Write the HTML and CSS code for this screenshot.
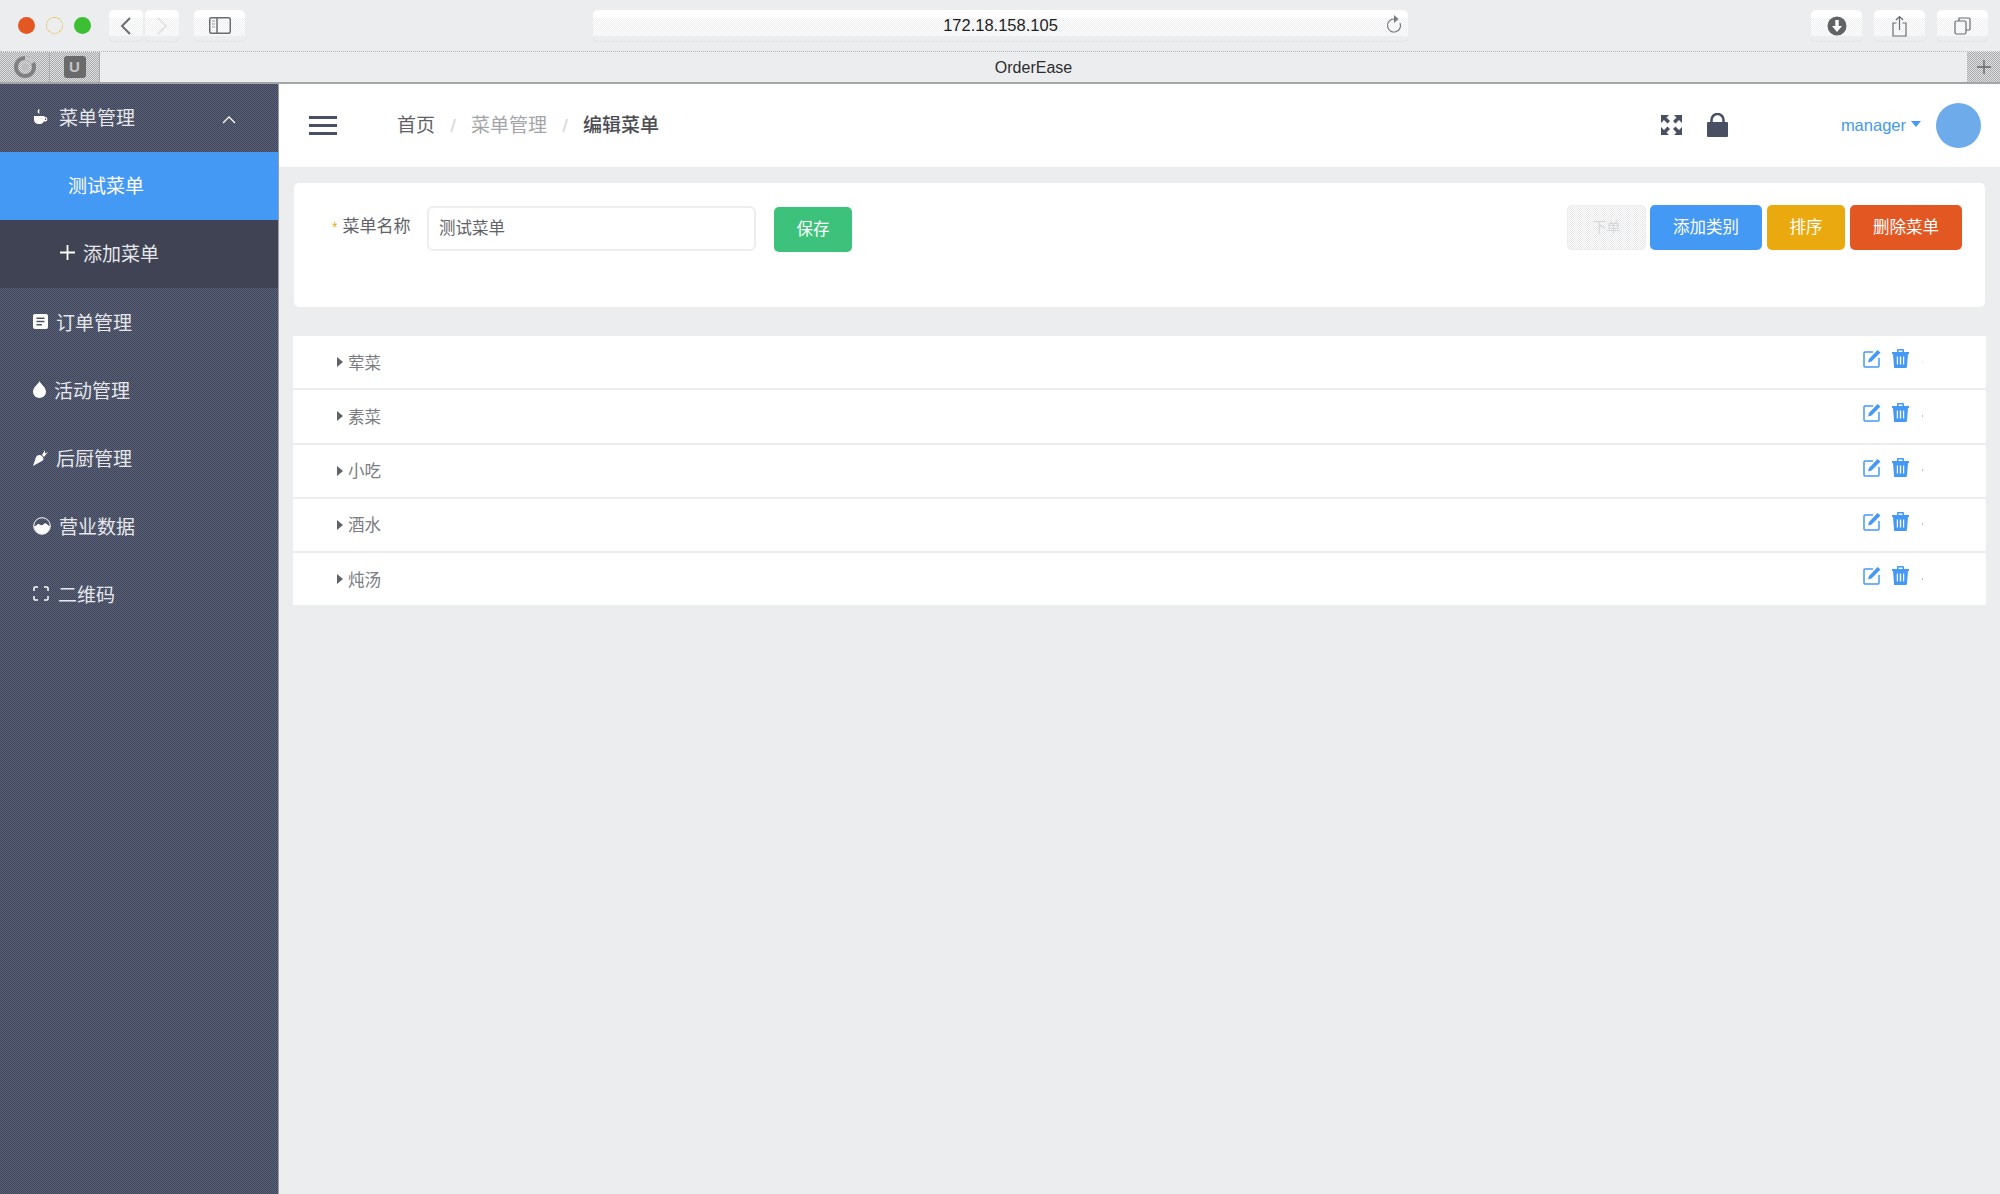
FILE: index.html
```html
<!DOCTYPE html>
<html lang="zh-CN">
<head>
    <meta charset="UTF-8">
    <meta name="viewport" content="width=device-width, initial-scale=1.0">
    <title>OrderEase</title>
    <link rel="stylesheet" href="styles.css">
</head>
<body>

    <!-- 浏览器工具栏 -->
    <div class="toolbar">
        <span class="light light-red"></span>
        <span class="light light-yellow"></span>
        <span class="light light-green"></span>
        <div class="tool-btn nav-back">
            <svg width="14" height="20" viewBox="0 0 14 20"><path d="M11 2 3 10l8 8" fill="none" stroke="#6b6d72" stroke-width="2"/></svg>
        </div>
        <div class="tool-btn nav-forward">
            <svg width="14" height="20" viewBox="0 0 14 20"><path d="m3 2 8 8-8 8" fill="none" stroke="#e2e3e5" stroke-width="2"/></svg>
        </div>
        <div class="tool-btn side-toggle">
            <svg width="22" height="17" viewBox="0 0 22 17"><rect x=".75" y=".75" width="20.5" height="15.5" rx="1.5" fill="none" stroke="#6b6d72" stroke-width="1.5"/><path d="M8 1v15" stroke="#6b6d72" stroke-width="1.5"/><path d="M3 4h3M3 7h3M3 10h3" stroke="#9a9ca0"/></svg>
        </div>
        <div class="url-bar">
            <span class="url-text">172.18.158.105</span>
            <svg class="reload" width="16" height="20" viewBox="0 0 16 20"><path d="M8 5a6.500 6.500 0 1 0 6 4" fill="none" stroke="#77797d" stroke-width="1.200"/><path d="M8 1 12.500 5 8 9z" fill="#77797d"/></svg>
        </div>
        <div class="tool-right">
            <div class="tool-btn wide">
                <svg width="20" height="20" viewBox="0 0 20 20"><circle cx="10" cy="10" r="9.500" fill="#606266"/><path d="M8.300 4h3.400v6H15l-5 6-5-6h3.300z" fill="#fff"/></svg>
            </div>
            <div class="tool-btn wide">
                <svg width="15" height="22" viewBox="0 0 15 22"><path d="M4.500 8H1v13h13V8h-3.500M7.500 15V1.500M4 5l3.500-3.500L11 5" fill="none" stroke="#6b6d72" stroke-width="1.200"/></svg>
            </div>
            <div class="tool-btn wide">
                <svg width="17" height="18" viewBox="0 0 17 18"><rect x="1" y="4" width="11" height="13" rx="1.500" fill="none" stroke="#6b6d72" stroke-width="1.200"/><path d="M5 4V1h10a1 1 0 0 1 1 1v10a1 1 0 0 1-1 1h-3" fill="none" stroke="#6b6d72" stroke-width="1.200"/></svg>
            </div>
        </div>
    </div>

    <!-- 标签栏 -->
    <div class="tabbar">
        <div class="pin-tab">
            <svg width="24" height="24" viewBox="0 0 24 24"><circle cx="12" cy="12" r="9" fill="none" stroke="#808082" stroke-width="4"/><path d="M12 3a9 9 0 0 1 8 5" fill="none" stroke="#c8c8ca" stroke-width="4"/><circle cx="12" cy="12" r="3.500" fill="#bdbdbf"/></svg>
        </div>
        <div class="pin-tab">
            <span class="u-badge">U</span>
        </div>
        <div class="tab-title">OrderEase</div>
        <div class="new-tab">
            <svg width="14" height="14" viewBox="0 0 14 14"><path d="M7 0v14M0 7h14" stroke="#666" stroke-width="1.300"/></svg>
        </div>
    </div>

    <div class="app">
        <div class="sidebar">
            <div class="menu-item menu-open">
                <svg class="menu-icon icon-cup" width="15" height="16" viewBox="0 0 15 16"><path d="M1 7h10.500v1h.7a2.200 2.200 0 0 1 0 4.400h-1.300A5 5 0 0 1 8 15H5a4.500 4.500 0 0 1-4-4zm11 2.300V11h.5a.9.9 0 0 0 0-1.800z" fill="#fff"/><path d="M6 0c1.500 1.500-1 2.500 1 5-3-1-3-3-1-5z" fill="#fff"/></svg>
                <span>菜单管理</span>
                <svg class="menu-arrow" width="14" height="8" viewBox="0 0 14 8"><path d="m1 7 6-6 6 6" fill="none" stroke="#fff" stroke-width="1.300"/></svg>
            </div>
            <div class="menu-item sub-active">测试菜单</div>
            <div class="menu-item sub-add">
                <svg class="add-icon" width="15" height="15" viewBox="0 0 15 15"><path d="M7.500 0v15M0 7.500h15" stroke="#fff" stroke-width="1.800"/></svg>
                <span>添加菜单</span>
            </div>
            <div class="menu-item menu-low">
                <svg class="menu-icon icon-order" width="15" height="15" viewBox="0 0 15 15"><path fill-rule="evenodd" d="M2 0h11a2 2 0 0 1 2 2v11a2 2 0 0 1-2 2H2a2 2 0 0 1-2-2V2a2 2 0 0 1 2-2zm1.500 3.500v1.500h8V3.500zm0 3.200v1.500h8V6.700zm0 3.200v1.500h5.500V9.900z" fill="#fff"/></svg>
                <span>订单管理</span>
            </div>
            <div class="menu-item menu-low">
                <svg class="menu-icon icon-drop" width="13" height="17" viewBox="0 0 13 17"><path d="M6.500 0c1 3 6.500 6 6.500 11a6.500 6 0 0 1-13 0C0 6 5.500 3 6.500 0z" fill="#fff"/></svg>
                <span>活动管理</span>
            </div>
            <div class="menu-item menu-low">
                <svg class="menu-icon icon-carrot" width="15" height="16" viewBox="0 0 15 16"><path d="M0 16 3 7c1-2 4-3 6-1s2 4 0 5z" fill="#fff"/><path d="M9 5l3-5v3.500L15 2l-4 5z" fill="#fff"/></svg>
                <span>后厨管理</span>
            </div>
            <div class="menu-item menu-low">
                <svg class="menu-icon icon-wave" width="18" height="18" viewBox="0 0 18 18"><circle cx="9" cy="9" r="8.300" fill="none" stroke="#fff" stroke-width="1"/><path d="M1 9c2 1 3-2 4.500-2S8 9 9.500 8s2-2.500 3.500-1.500S15.500 9 17 9a8 8 0 0 1-16 0z" fill="#fff"/></svg>
                <span>营业数据</span>
            </div>
            <div class="menu-item menu-low">
                <svg class="menu-icon icon-scan" width="16" height="15" viewBox="0 0 16 15"><path d="M5 1H2a1 1 0 0 0-1 1v3M11 1h3a1 1 0 0 1 1 1v3M5 14H2a1 1 0 0 1-1-1v-3M11 14h3a1 1 0 0 0 1-1v-3" fill="none" stroke="#fff" stroke-width="1.500"/></svg>
                <span>二维码</span>
            </div>
        </div>

        <div class="main">
            <div class="header">
                <div class="hamburger"><span></span><span></span><span></span></div>
                <div class="breadcrumb">
                    <span class="crumb-home">首页</span>
                    <span class="crumb-sep">/</span>
                    <span class="crumb-mid">菜单管理</span>
                    <span class="crumb-sep">/</span>
                    <span class="crumb-now">编辑菜单</span>
                </div>
                <div class="header-right">
                    <svg class="icon-full" width="21" height="20" viewBox="0 0 21 20"><path d="M0 0h8L5.500 2.500 9 6 6.500 8.500 3 5 0 8zM21 0h-8l2.500 2.500L12 6l2.500 2.500L18 5l3 3zM0 20v-8l3 3 3.500-3.500L9 14l-3.500 3.500L8 20zM21 20h-8l2.500-2.500L12 14l2.500-2.500L18 15l3-3z" fill="#4a5064"/></svg>
                    <svg class="icon-lock" width="21" height="24" viewBox="0 0 21 24"><path d="M4.500 11V7a6 6 0 0 1 12 0V11" fill="none" stroke="#4a5064" stroke-width="2.500"/><rect y="9" width="21" height="15" rx="1" fill="#4a5064"/></svg>
                    <span class="user-name">manager</span>
                    <span class="user-caret"></span>
                    <span class="avatar"></span>
                </div>
            </div>

            <div class="card">
                <label class="field-label"><span class="star">*</span>菜单名称</label>
                <div class="name-input">测试菜单</div>
                <button class="btn btn-save">保存</button>
                <div class="btn-group">
                    <button class="btn btn-disabled">下单</button>
                    <button class="btn btn-blue">添加类别</button>
                    <button class="btn btn-orange">排序</button>
                    <button class="btn btn-red">删除菜单</button>
                </div>
            </div>

            <div class="category-list">
                <div class="category">
                    <span class="caret"></span><span class="cat-name">荤菜</span>
                    <div class="cat-actions">
                        <svg width="18" height="19" viewBox="0 0 18 19"><use href="#edit-icon"/></svg>
                        <svg width="17" height="19" viewBox="0 0 17 19"><use href="#trash-icon"/></svg>
                        <span class="cat-dot"></span>
                    </div>
                </div>
                <div class="category">
                    <span class="caret"></span><span class="cat-name">素菜</span>
                    <div class="cat-actions">
                        <svg width="18" height="19" viewBox="0 0 18 19"><use href="#edit-icon"/></svg>
                        <svg width="17" height="19" viewBox="0 0 17 19"><use href="#trash-icon"/></svg>
                        <span class="cat-dot"></span>
                    </div>
                </div>
                <div class="category">
                    <span class="caret"></span><span class="cat-name">小吃</span>
                    <div class="cat-actions">
                        <svg width="18" height="19" viewBox="0 0 18 19"><use href="#edit-icon"/></svg>
                        <svg width="17" height="19" viewBox="0 0 17 19"><use href="#trash-icon"/></svg>
                        <span class="cat-dot"></span>
                    </div>
                </div>
                <div class="category">
                    <span class="caret"></span><span class="cat-name">酒水</span>
                    <div class="cat-actions">
                        <svg width="18" height="19" viewBox="0 0 18 19"><use href="#edit-icon"/></svg>
                        <svg width="17" height="19" viewBox="0 0 17 19"><use href="#trash-icon"/></svg>
                        <span class="cat-dot"></span>
                    </div>
                </div>
                <div class="category">
                    <span class="caret"></span><span class="cat-name">炖汤</span>
                    <div class="cat-actions">
                        <svg width="18" height="19" viewBox="0 0 18 19"><use href="#edit-icon"/></svg>
                        <svg width="17" height="19" viewBox="0 0 17 19"><use href="#trash-icon"/></svg>
                        <span class="cat-dot"></span>
                    </div>
                </div>
            </div>
        </div>
    </div>

    <!-- 操作图标 -->
    <svg class="icon-defs" width="0" height="0">
        <symbol id="edit-icon" viewBox="0 0 18 19">
            <path d="M10 3H2a1 1 0 0 0-1 1v13a1 1 0 0 0 1 1h13a1 1 0 0 0 1-1V9" fill="none" stroke="#4499f5" stroke-width="1.500"/>
            <path d="M5 13.500 6 10 14.500 1l3 2.500L8.500 12.500z" fill="#4499f5"/>
        </symbol>
        <symbol id="trash-icon" viewBox="0 0 17 19">
            <path fill-rule="evenodd" d="M0 3h5V1a1 1 0 0 1 1-1h5a1 1 0 0 1 1 1v2h5v2h-1l-1 12.500a1.500 1.500 0 0 1-1.500 1.500h-9A1.500 1.500 0 0 1 2 17.500L1 5H0zM6.500 1.500V3h4V1.500zM4.800 7.500v8H6v-8zm3 0v8h1.400v-8zm3.200 0v8h1.200v-8z" fill="#4499f5"/>
        </symbol>
    </svg>

</body>
</html>
```

FILE: styles.css
```css
* {
    box-sizing: border-box;
}

body {
    font-family: "Liberation Sans", "Noto Sans CJK SC", sans-serif;
    background-color: #ecedef;
    margin: 0;
    width: 2000px;
    height: 1194px;
    overflow: hidden;
}

.icon-defs {
    display: block;
    height: 0;
}

/* toolbar */
.toolbar {
    height: 52px;
    display: flex;
    align-items: flex-start;
    padding: 10px 12px 0 18px;
    border-bottom: 1px dotted #b5b6b8;
    background-color: #ecedef;
}

.light {
    width: 17px;
    height: 17px;
    border-radius: 50%;
    margin: 7px 11px 0 0;
}

.light-red {
    background-color: #e35722;
}

.light-yellow {
    border: 1px dotted #eaa90e;
}

.light-green {
    background-color: #3dbf33;
    margin-right: 0;
}

.tool-btn,
.url-bar {
    height: 32px;
    border-radius: 5px;
    border-bottom: 1px dotted #c8c9cb;
    background:
        linear-gradient(#fff 8px, transparent 8px, transparent 26px, #ecedef 26px),
        repeating-conic-gradient(#fff 0 25%, #eeeff1 0 50%) 0 0 / 2px 2px;
}

.tool-btn {
    width: 34px;
    display: flex;
    align-items: center;
    justify-content: center;
}

.nav-back {
    margin-left: 18px;
}

.nav-forward {
    margin-left: 2px;
}

.side-toggle {
    width: 51px;
    margin-left: 15px;
}

.url-bar {
    width: 815px;
    margin-left: 348px;
    position: relative;
    text-align: center;
    font-size: 16.5px;
    line-height: 31px;
    color: #1d1d1f;
}

.reload {
    position: absolute;
    top: 4px;
    right: 6px;
}

.tool-right {
    margin-left: auto;
    display: flex;
    gap: 12px;
}

.wide {
    width: 51px;
}

/* tabs */
.tabbar {
    height: 32px;
    display: flex;
    align-items: stretch;
    border-bottom: 2px solid #a4a5a7;
    background-color: #ecedef;
}

.pin-tab {
    width: 50px;
    border-right: 1px solid #aaa;
    background: repeating-conic-gradient(#a8a9ab 0 25%, #e0e1e3 0 50%) 0 0 / 2px 2px;
    display: flex;
    align-items: center;
    justify-content: center;
}

.u-badge {
    width: 22px;
    height: 22px;
    border-radius: 3px;
    background-color: #6a6a6c;
    color: #c4c4c6;
    font-size: 15px;
    font-weight: bold;
    line-height: 22px;
    text-align: center;
}

.tab-title {
    flex: 1;
    text-align: center;
    font-size: 16px;
    line-height: 31px;
    color: #2d2d2f;
}

.new-tab {
    width: 33px;
    background: repeating-conic-gradient(#a8a9ab 0 25%, #e0e1e3 0 50%) 0 0 / 2px 2px;
    display: flex;
    align-items: center;
    justify-content: center;
}

/* app */
.app {
    display: flex;
    height: 1110px;
}

.sidebar {
    width: 279px;
    border-right: 1px solid #999ca3;
    background: repeating-conic-gradient(#5a6178 0 25%, #3f4559 0 50%) 0 0 / 2px 2px;
}

.menu-item {
    height: 68px;
    display: flex;
    align-items: center;
    padding-left: 33px;
    padding-bottom: 3px;
    font-size: 19px;
    color: #e6e7ea;
}

.menu-low {
    padding-bottom: 1px;
}

.menu-open {
    position: relative;
}

.menu-arrow {
    position: absolute;
    left: 222px;
    top: 32px;
}

.sub-active {
    background-color: #4499f5;
    color: #fff;
    padding-left: 68px;
}

.sub-add {
    background-color: #3f4354;
    padding-left: 60px;
}

.add-icon {
    margin-right: 8px;
}

.icon-cup {
    margin-right: 11px;
}

.icon-order {
    margin-right: 8px;
}

.icon-drop {
    margin-right: 8px;
}

.icon-carrot {
    margin-right: 8px;
}

.icon-wave {
    margin-right: 8px;
}

.icon-scan {
    margin-right: 9px;
}

/* main */
.main {
    flex: 1;
    background-color: #ecedef;
}

.header {
    height: 83px;
    background-color: #fff;
    display: flex;
    align-items: center;
    padding-left: 30px;
}

.hamburger {
    width: 28px;
    display: flex;
    flex-direction: column;
    gap: 5px;
    margin-bottom: 1px;
}

.hamburger span {
    height: 3px;
    background-color: #4a5064;
}

.breadcrumb {
    margin-left: 60px;
    display: flex;
    font-size: 19px;
    line-height: 28px;
}

.crumb-home {
    color: #606266;
}

.crumb-sep {
    color: #d4d5d8;
    width: 36px;
    text-align: center;
}

.crumb-mid {
    color: #a3a5a9;
}

.crumb-now {
    color: #4a4c52;
    font-weight: 500;
}

.header-right {
    margin-left: auto;
    display: flex;
    align-items: center;
    padding-right: 19px;
}

.icon-full {
    margin-bottom: 1px;
}

.icon-lock {
    margin: 0 0 1px 25px;
}

.user-name {
    margin-left: 113px;
    color: #4499f5;
    font-size: 16.5px;
}

.user-caret {
    width: 0;
    height: 0;
    margin: 0 15px 3px 5px;
    border-left: 5px solid transparent;
    border-right: 5px solid transparent;
    border-top: 6px solid #4499f5;
}

.avatar {
    width: 45px;
    height: 45px;
    border-radius: 50%;
    background-color: #6eabeb;
}

.card {
    margin: 16px 15px 0 15px;
    height: 124px;
    background-color: #fff;
    border-radius: 5px;
    display: flex;
    align-items: flex-start;
    padding: 22px 23px 0 38px;
}

.field-label {
    width: 95px;
    font-size: 17px;
    line-height: 44px;
    color: #606266;
}

.star {
    color: #eaa90e;
    margin-right: 5px;
    font-size: 14px;
}

.name-input {
    width: 329px;
    height: 45px;
    border: 2px solid #ecedef;
    border-radius: 6px;
    padding-left: 10px;
    font-size: 16.5px;
    line-height: 41px;
    color: #606266;
    margin-top: 1px;
}

.btn {
    border: none;
    border-radius: 5px;
    height: 45px;
    font-family: inherit;
    font-size: 16.5px;
    color: #fff;
    padding: 0 0 3px 0;
}

.btn-save {
    width: 78px;
    margin: 2px 0 0 18px;
    background-color: #3cc27b;
}

.btn-group {
    margin-left: auto;
    display: flex;
    gap: 4px;
}

.btn-disabled {
    width: 79px;
    background: repeating-conic-gradient(#fff 0 25%, #e6e7e9 0 50%) 0 0 / 2px 2px;
    border: 1px solid #ecedef;
    color: #d6d7d9;
    font-size: 14px;
}

.btn-blue {
    width: 112px;
    background-color: #4499f5;
}

.btn-orange {
    width: 78px;
    margin-left: 1px;
    background-color: #eaa90e;
}

.btn-red {
    width: 112px;
    margin-left: 1px;
    background-color: #e35722;
}

.category-list {
    margin: 29px 14px 0 14px;
    display: flex;
    flex-direction: column;
    gap: 2px;
}

.category {
    height: 52.25px;
    background-color: #fff;
    display: flex;
    align-items: center;
    padding-left: 44px;
}

.caret {
    width: 0;
    height: 0;
    border-top: 5px solid transparent;
    border-bottom: 5px solid transparent;
    border-left: 6px solid #606266;
}

.cat-name {
    margin: 0 0 1px 5px;
    font-size: 16.5px;
    color: #7b7d82;
}

.cat-actions {
    margin-left: auto;
    display: flex;
    align-items: center;
    gap: 11px;
    margin-bottom: 7px;
    padding-right: 63px;
}

.cat-dot {
    width: 1px;
    height: 2px;
    background-color: #bcbdc0;
    margin: 6px 0 0 2px;
}

.category:first-child .cat-dot {
    background-color: #e8e8ea;
}
```
